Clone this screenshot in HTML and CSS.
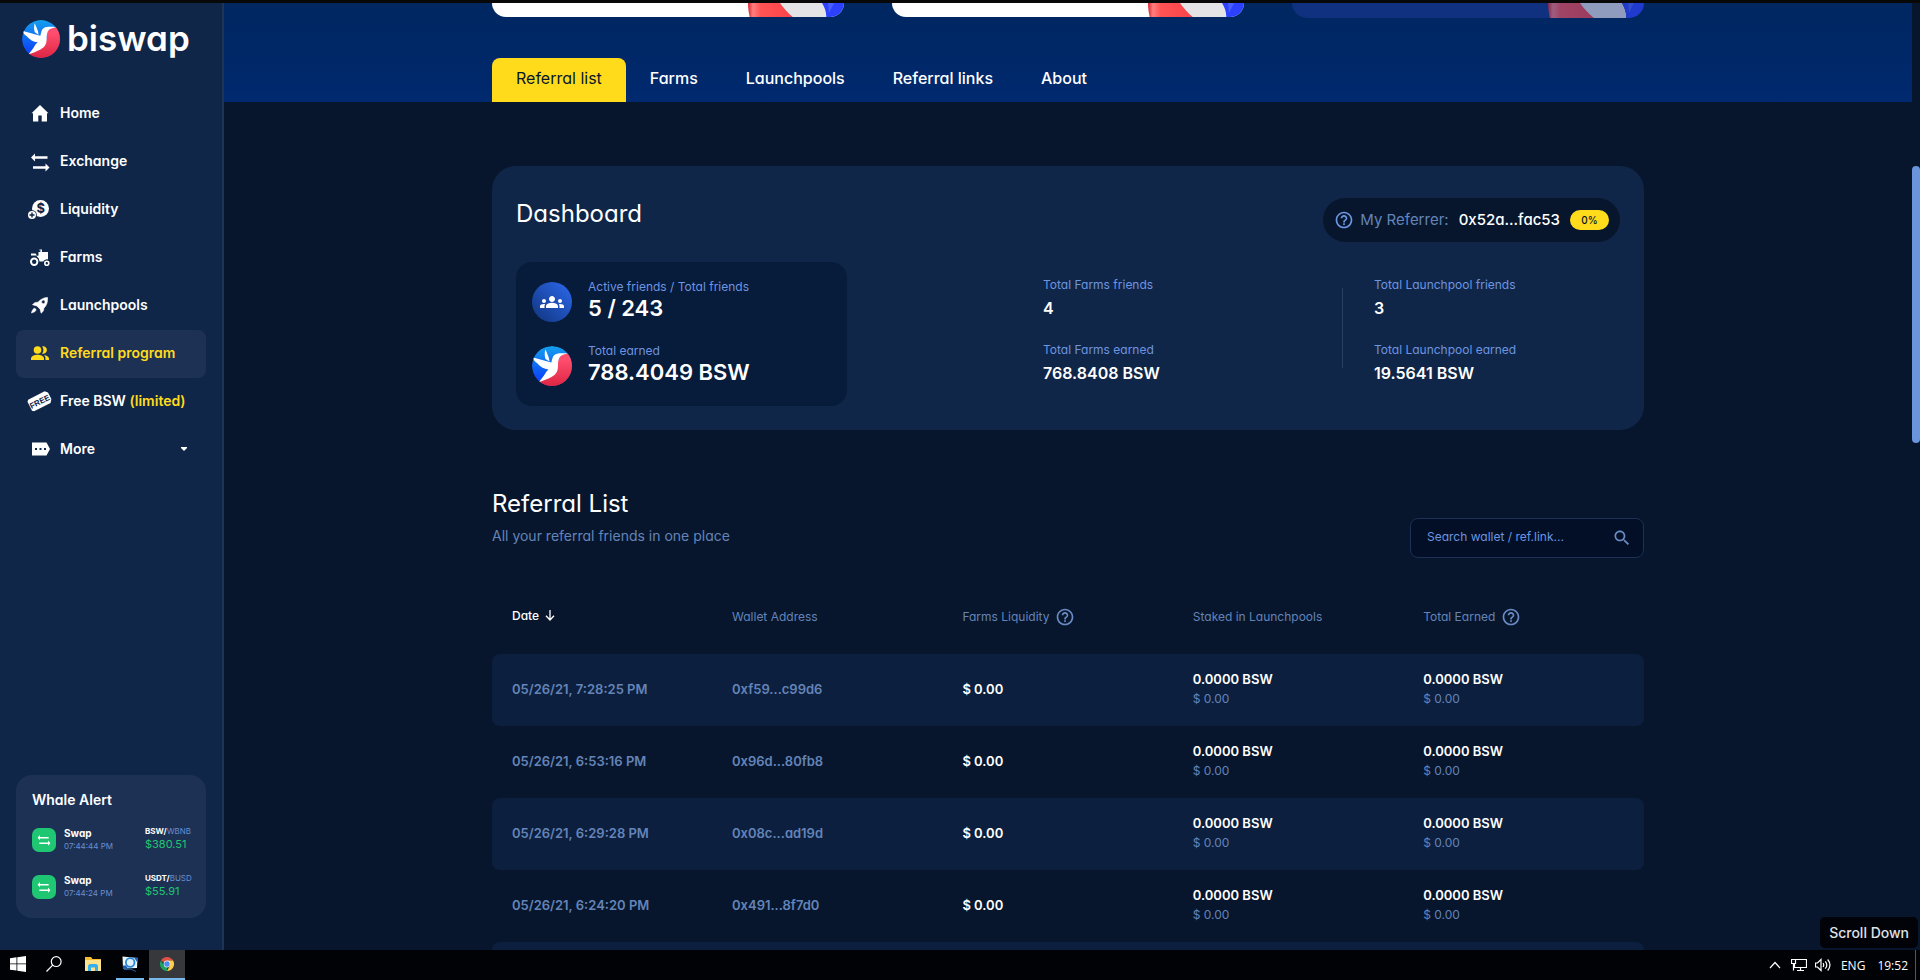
FILE: index.html
```html
<!DOCTYPE html>
<html lang="en">
<head>
<meta charset="utf-8">
<title>Biswap - Referral program</title>
<link rel="stylesheet" href="styles.css">
</head>
<body>
<svg class="defs" aria-hidden="true">
  <defs>
    <linearGradient id="blueGrad" x1="0" y1="0" x2="0" y2="1"><stop offset="0" stop-color="#14a0ee"/><stop offset="0.75" stop-color="#0d4cf6"/></linearGradient>
    <linearGradient id="redGrad" x1="0" y1="0" x2="0" y2="1"><stop offset="0.2" stop-color="#ff4d6d"/><stop offset="1" stop-color="#dc2341"/></linearGradient>
    <linearGradient id="ballRed" x1="0" y1="0" x2="1" y2="0"><stop offset="0" stop-color="#d8242f"/><stop offset="0.1" stop-color="#ff7f80"/><stop offset="0.25" stop-color="#ff5354"/><stop offset="1" stop-color="#f94147"/></linearGradient>
    <symbol id="bird" viewBox="0 0 40 40">
      <circle cx="20" cy="20" r="20" fill="url(#blueGrad)"/>
      <path fill="url(#redGrad)" d="M36 7.500C29 8 26 11 26 17c0 8-3 12-19 18.500A20 20 0 0 0 36 7.500z"/>
      <path fill="#fff" d="M36 7.300C32 7.500 26 6.500 23 8.500c-2.500 1.500-2.700 4.500-3.700 8L1 11.500c.5 2.500 2 4.500 4 5.500 3 3.500 7 6 11.500 6.500-2 1.500-3 3.500-4.500 6L7 36c3-1 8-2.500 12.500-5 5.500-3 6.500-6.500 6.500-12 0-3.500.5-7.500 3.500-9.500 2-1.200 4.500-1.200 6.500-2.200z"/>
      <path fill="#fff" d="M13.300 3.500c1.200 2.500 4 8 4.200 12l-4-2.500c-1-3-1-6-.2-9.500z"/>
    </symbol>
    <symbol id="swap" viewBox="0 0 24 24"><path d="M1 8l4-4.500v3.200h15v2.600H5v3.200zM23 17.500L19 13v3.200H4v2.600h15V22z"/></symbol>
    <symbol id="help" viewBox="0 0 24 24"><path d="M11 18h2v-2h-2v2zm1-16C6.480 2 2 6.480 2 12s4.480 10 10 10 10-4.480 10-10S17.520 2 12 2zm0 18c-4.410 0-8-3.590-8-8s3.590-8 8-8 8 3.590 8 8-3.590 8-8 8zm0-14c-2.210 0-4 1.790-4 4h2c0-1.100.9-2 2-2s2 .9 2 2c0 2-3 1.750-3 5h2c0-2.250 3-2.500 3-5 0-2.210-1.790-4-4-4z"/></symbol>
    <symbol id="ball" viewBox="0 0 96 16" preserveAspectRatio="none">
      <path fill="url(#ballRed)" d="M0 0h50v16H2C1 11 0 6 0 0z"/>
      <path fill="#e4e4e6" d="M32 0h42c3 6 5 11 4 16H47C41 11 36 6 32 0z"/>
      <path fill="#2b41ff" d="M74 0h22v16H78c1-5-1-11-4-16z"/>
      <path fill="#4a5fff" d="M80 0h6l-5 10z"/>
    </symbol>
  </defs>
</svg>
<div class="app">
  <aside class="sidebar">
    <a class="brand" href="#"><svg class="brand-mark" aria-hidden="true"><use href="#bird"/></svg><span class="brand-name">biswap</span></a>
    <nav class="menu" aria-label="Main">
      <a class="menu-item" href="#"><svg class="menu-icon" viewBox="0 0 24 24"><path d="M10.300 20.500v-6h3.400v6H19v-8.300h1.500L12 4l-8.500 8.200H5v8.300z"/></svg>Home</a>
      <a class="menu-item" href="#"><svg class="menu-icon" viewBox="0 0 24 24"><path d="M3 8.500l4-4v2.700h12.500v2.600H7v2.700zM21.500 18.500l-4-4v2.700H5v2.600h12.500v2.700z"/></svg>Exchange</a>
      <a class="menu-item" href="#"><svg class="menu-icon" viewBox="0 0 24 24"><circle cx="12.500" cy="11.500" r="8.500"/><text class="cutout coin-sign" x="12.800" y="16">$</text><circle cx="4" cy="18" r="4.800" class="cutout"/><circle cx="4" cy="18" r="4"/><path class="cutout" d="M3.300 15.500h1.400v1.800h1.800v1.400H4.700v1.800H3.300v-1.800H1.500v-1.400h1.800z"/></svg>Liquidity</a>
      <a class="menu-item" href="#"><svg class="menu-icon" viewBox="0 0 24 24"><path d="M3 8.500h4.500l1.500 2H3zM10.500 10.500V7h1.500l1-1.500h-1.500v-1H14v2L13.500 7H20v7.500h-1.500l-2 2h-5l-.8-3-2.200-2.500z"/><circle cx="6.200" cy="16.800" r="5" class="cutout"/><circle cx="6.200" cy="16.800" r="3.200" fill="none" stroke="#fff" stroke-width="2"/><circle cx="18.800" cy="18.200" r="3.800" class="cutout"/><circle cx="18.800" cy="18.200" r="2" fill="none" stroke="#fff" stroke-width="1.600"/></svg>Farms</a>
      <a class="menu-item" href="#"><svg class="menu-icon" viewBox="0 0 24 24"><path fill-rule="evenodd" d="M19.500 4.500c.3 4.500-.7 8-3.700 10.800.2 2-1 3.700-2.700 4.900l-1-4-3.300-3.300-4.300-1.200c1.500-2 3.500-2.700 5.500-2.500C13 6 16 4.500 19.500 4.500zM15.300 10.700a1.800 1.800 0 1 0 0-3.600 1.800 1.800 0 0 0 0 3.600zM6 15.500c.9-.7 2.500.8 1.800 2C7.200 18.900 5 19.500 3.500 20c.3-1.500 1-3.700 2.500-4.500z" stroke="#fff" stroke-width=".6"/></svg>Launchpools</a>
      <a class="menu-item active" aria-current="page" href="#"><svg class="menu-icon" viewBox="0 0 24 24"><circle cx="9.500" cy="9" r="3.800"/><path d="M3 19v-1.300c0-2.700 3.500-3.900 6.500-3.900s6.500 1.200 6.500 3.900V19zM14 12.500a5 5 0 0 0 0-7 3.700 3.700 0 1 1 0 7zM17.500 19v-1.500c0-1.500-.6-2.600-1.500-3.500 2.500.3 5 1.500 5 3.700V19z"/></svg>Referral program</a>
      <a class="menu-item" href="#"><svg class="menu-icon" viewBox="0 0 24 24"><g transform="rotate(-27 12 12)"><path d="M2 5.500h18.500L23 8v7.500L20.500 18.500H2L.5 17V7z"/><text class="cutout free-sign" x="11.500" y="15.200">FREE</text></g></svg><span>Free BSW <em>(limited)</em></span></a>
      <button class="menu-item" type="button"><svg class="menu-icon" viewBox="0 0 24 24"><path d="M4 5.500h14.500L22 12l-3.500 6.500H4z"/><path class="cutout" d="M7 11h2v2H7zm4.500 0h2v2h-2zm4.500 0h2v2h-2z"/></svg>More<svg class="caret" viewBox="0 0 6 4"><path d="M0 0h6v1L3 4 0 1z"/></svg></button>
    </nav>
    <section class="whale">
      <h2 class="whale-title">Whale Alert</h2>
      <div class="trade">
        <span class="trade-icon"><svg viewBox="0 0 24 24"><use href="#swap"/></svg></span>
        <div class="trade-info"><b>Swap</b><small>07:44:44 PM</small></div>
        <div class="trade-sum"><small><b>BSW/</b>WBNB</small><span>$380.51</span></div>
      </div>
      <div class="trade">
        <span class="trade-icon"><svg viewBox="0 0 24 24"><use href="#swap"/></svg></span>
        <div class="trade-info"><b>Swap</b><small>07:44:24 PM</small></div>
        <div class="trade-sum"><small><b>USDT/</b>BUSD</small><span>$55.91</span></div>
      </div>
    </section>
  </aside>
  <main class="content">
    <header class="hero">
      <div class="container">
        <div class="promo-row">
          <div class="promo"><svg class="promo-art"><use href="#ball"/></svg></div>
          <div class="promo"><svg class="promo-art"><use href="#ball"/></svg></div>
          <div class="promo promo-dim"><svg class="promo-art"><use href="#ball"/></svg></div>
        </div>
        <nav class="tabs" aria-label="Sections">
          <a class="tab tab-active" href="#">Referral list</a>
          <a class="tab" href="#">Farms</a>
          <a class="tab" href="#">Launchpools</a>
          <a class="tab" href="#">Referral links</a>
          <a class="tab" href="#">About</a>
        </nav>
      </div>
    </header>
    <div class="container">
      <section class="dashboard">
        <div class="dashboard-head">
          <h1 class="heading">Dashboard</h1>
          <div class="referrer"><svg class="help-icon"><use href="#help"/></svg><span class="referrer-label">My Referrer:</span><span>0x52a...fac53</span><span class="percent">0%</span></div>
        </div>
        <div class="dashboard-body">
          <div class="totals">
            <div class="total"><span class="total-icon"><svg viewBox="0 0 24 24"><path d="M12 12.750c1.630 0 3.070.39 4.240.9 1.080.48 1.760 1.560 1.760 2.730V18H6v-1.610c0-1.180.68-2.260 1.760-2.730 1.170-.52 2.610-.91 4.240-.91zM4 13c1.100 0 2-.9 2-2s-.9-2-2-2-2 .9-2 2 .9 2 2 2zm1.130 1.100C4.760 14.040 4.390 14 4 14c-.99 0-1.930.21-2.780.58C.48 14.900 0 15.620 0 16.430V18h4.500v-1.610c0-.83.23-1.610.63-2.290zM20 13c1.100 0 2-.9 2-2s-.9-2-2-2-2 .9-2 2 .9 2 2 2zm4 3.430c0-.81-.48-1.530-1.220-1.850C21.930 14.210 20.990 14 20 14c-.39 0-.76.04-1.130.1.4.68.63 1.460.63 2.290V18H24v-1.570zM12 6c1.660 0 3 1.340 3 3s-1.340 3-3 3-3-1.340-3-3 1.340-3 3-3z"/></svg></span>
              <div class="total-text"><div class="label">Active friends / Total friends</div><div class="total-value">5 / 243</div></div></div>
            <div class="total"><svg class="total-bird"><use href="#bird"/></svg>
              <div class="total-text"><div class="label">Total earned</div><div class="total-value">788.4049 BSW</div></div></div>
          </div>
          <div class="stats">
            <div class="stat"><div class="label">Total Farms friends</div><div class="stat-value">4</div></div>
            <div class="stat"><div class="label">Total Farms earned</div><div class="stat-value">768.8408 BSW</div></div>
          </div>
          <div class="divider"></div>
          <div class="stats stats-last">
            <div class="stat"><div class="label">Total Launchpool friends</div><div class="stat-value">3</div></div>
            <div class="stat"><div class="label">Total Launchpool earned</div><div class="stat-value">19.5641 BSW</div></div>
          </div>
        </div>
      </section>
      <div class="list-head">
        <div><h2 class="heading">Referral List</h2><p class="subtitle">All your referral friends in one place</p></div>
        <form class="search"><input class="search-input" type="text" aria-label="Search wallet or referral link" placeholder="Search wallet / ref.link..."><button class="search-button" type="button" aria-label="Search"><svg viewBox="0 0 24 24"><path d="M15.500 14h-.79l-.28-.27C15.410 12.590 16 11.110 16 9.500 16 5.910 13.090 3 9.500 3S3 5.910 3 9.500 5.910 16 9.500 16c1.610 0 3.090-.59 4.230-1.570l.27.28v.79l5 4.990L20.490 19l-4.990-5zm-6 0C7.010 14 5 11.990 5 9.500S7.010 5 9.500 5 14 7.010 14 9.500 11.990 14 9.500 14z"/></svg></button></form>
      </div>
      <table class="list">
        <colgroup><col class="col-date"><col class="col-mid"><col class="col-mid"><col class="col-mid"><col></colgroup>
        <thead><tr>
          <th><button class="sort" type="button">Date <svg viewBox="0 0 10 12"><path d="M5 1v9.500M1 6.800L5 11l4-4.200" fill="none" stroke="#fff" stroke-width="1.300"/></svg></button></th>
          <th>Wallet Address</th>
          <th><span class="with-help">Farms Liquidity <svg class="help-icon"><use href="#help"/></svg></span></th>
          <th>Staked in Launchpools</th>
          <th><span class="with-help">Total Earned <svg class="help-icon"><use href="#help"/></svg></span></th>
        </tr></thead>
        <tbody>
          <tr><td class="muted">05/26/21, 7:28:25 PM</td><td class="muted">0xf59...c99d6</td><td>$ 0.00</td><td>0.0000 BSW<small>$ 0.00</small></td><td>0.0000 BSW<small>$ 0.00</small></td></tr>
          <tr><td class="muted">05/26/21, 6:53:16 PM</td><td class="muted">0x96d...80fb8</td><td>$ 0.00</td><td>0.0000 BSW<small>$ 0.00</small></td><td>0.0000 BSW<small>$ 0.00</small></td></tr>
          <tr><td class="muted">05/26/21, 6:29:28 PM</td><td class="muted">0x08c...ad19d</td><td>$ 0.00</td><td>0.0000 BSW<small>$ 0.00</small></td><td>0.0000 BSW<small>$ 0.00</small></td></tr>
          <tr><td class="muted">05/26/21, 6:24:20 PM</td><td class="muted">0x491...8f7d0</td><td>$ 0.00</td><td>0.0000 BSW<small>$ 0.00</small></td><td>0.0000 BSW<small>$ 0.00</small></td></tr>
          <tr><td></td><td></td><td></td><td></td><td></td></tr>
        </tbody>
      </table>
    </div>
  </main>
  <div class="scroll-track"><div class="scroll-thumb"></div></div>
  <div class="tooltip" role="tooltip">Scroll Down</div>
</div>
<footer class="taskbar">
  <button class="task" type="button" aria-label="Start"><svg viewBox="0 0 16 16"><path d="M0 2.200L6.500 1.300v6.200H0zM7.300 1.200L16 0v7.500H7.300zM0 8.300h6.500v6.300L0 13.700zM7.300 8.300H16V16l-8.700-1.200z"/></svg></button>
  <button class="task" type="button" aria-label="Search"><svg class="line-icon" viewBox="0 0 16 16"><circle cx="10.200" cy="5.600" r="4.900"/><path d="M6.700 9.200L.5 15.500"/></svg></button>
  <button class="task task-files" type="button" aria-label="File Explorer"><svg viewBox="0 0 16 16"><path fill="#f5bd36" d="M0 1h6l1.500 2H16v3H0z"/><path fill="#ffe28c" d="M0 4h16v11H0z"/><path fill="#36b0ec" d="M3 15V9.500L4.500 8h7L13 9.500V15h-3v-3.500H6V15z"/></svg></button>
  <button class="task task-open" type="button" aria-label="Screen tool"><svg viewBox="0 0 16 16"><path fill="#eaf6fb" d="M.5.500l15 1.500-.5 10-14 .5z"/><path fill="#1b5db5" d="M12 1.500h3.500L15 6zM1 9.500h3l2 3H1z"/><circle cx="8.200" cy="6.500" r="4.300" fill="#dff2fb" stroke="#2a86d2" stroke-width="1.800"/><path d="M2 13.500l7-.3 5 2.300" stroke="#1b62a8" fill="none"/></svg></button>
  <button class="task task-current" type="button" aria-label="Chrome"><svg viewBox="0 0 16 16"><path fill="#dd5144" d="M8 8L1.900 4.500A7 7 0 0 1 14.100 4.500H8z"/><path fill="#ffcd46" d="M8 4.500h6.100A7 7 0 0 1 8 15l3-5.200z"/><path fill="#1da362" d="M1.900 4.500l3.100 5.200 3 1.800L8 15A7 7 0 0 1 1.900 4.500z"/><circle cx="8" cy="8" r="3.400" fill="#f1f1f1"/><circle cx="8" cy="8" r="2.700" fill="#4c8bf5"/></svg></button>
  <div class="tray">
    <svg class="tray-chevron line-icon" viewBox="0 0 12 8"><path d="M1 7l5-5.500L11 7"/></svg>
    <svg class="tray-icon line-icon" viewBox="0 0 16 16"><path d="M4.500 2.500h11v8H3.500V7M9.500 10.500v3M6 13.500h7M.5 2.500h4v4h-4zM2.500 6.500v7"/></svg>
    <svg class="tray-icon line-icon" viewBox="0 0 16 16"><path d="M.5 6v4h2l3.500 3.500v-11L2.500 6zM8 6q1.500 2 0 4M10.300 4.300q3 3.700 0 7.400M12.700 2.500q4.500 5.500 0 11"/></svg>
    <span class="tray-lang">ENG</span><span>19:52</span>
  </div>
</footer>
</body>
</html>
```

FILE: styles.css
```css
* { box-sizing: border-box; }
body {
  margin: 0;
  height: 100vh;
  display: flex;
  flex-direction: column;
  overflow: hidden;
  background: #07162d;
  border-top: 3px solid #080808;
  color: #fff;
  font-family: Inter, "Liberation Sans", sans-serif;
  font-feature-settings: "cv11";
  font-size: 14px;
}
h1, h2, p { margin: 0; }
a { color: inherit; text-decoration: none; }
button { border: 0; padding: 0; background: none; color: inherit; font: inherit; font-feature-settings: inherit; }
svg { display: block; flex: none; fill: currentColor; }
.line-icon { fill: none; stroke: #fff; stroke-width: 1.2; }
.defs { position: absolute; width: 0; height: 0; }

.app { position: relative; flex: 1; min-height: 0; display: flex; }

.sidebar {
  width: 224px;
  flex: none;
  display: flex;
  flex-direction: column;
  padding: 16px 16px 32px;
  background: #102648;
  border-right: 2px solid #1e3355;
}
.brand { display: flex; align-items: center; gap: 7px; padding-left: 6px; height: 40px; }
.brand-mark { width: 38px; height: 38px; border-radius: 50%; }
.brand-name { padding-bottom: 2px; font-size: 35px; line-height: 36px; font-weight: 600; }
.menu { display: flex; flex-direction: column; margin-top: 31px; }
.menu-item {
  display: flex;
  align-items: center;
  gap: 8px;
  height: 48px;
  padding: 0 19px 3px 12px;
  border-radius: 8px;
  font-weight: 600;
}
.menu-item em { font-style: normal; color: #ffdb1c; }
.menu-icon { width: 24px; height: 24px; overflow: visible; }
.cutout { fill: #102648; }
.coin-sign { font: 700 13px Inter, sans-serif; text-anchor: middle; }
.free-sign { font: 700 8px "Liberation Sans", sans-serif; text-anchor: middle; }
.active { background: #1d3154; color: #ffdb1c; }
.caret { width: 6px; height: 4px; margin-left: auto; }

.whale { margin-top: auto; height: 143px; padding: 15px 15px 0 16px; border-radius: 16px; background: #1d3154; }
.whale-title { font-size: 14px; line-height: 20px; font-weight: 600; }
.trade { display: flex; gap: 8px; height: 24px; margin-top: 18px; }
.trade + .trade { margin-top: 23px; }
.trade-icon { display: grid; place-items: center; width: 24px; height: 24px; border-radius: 7px; background: #1fc772; }
.trade-icon svg { width: 14px; height: 14px; }
.trade-info, .trade-sum { display: flex; flex-direction: column; justify-content: center; gap: 2px; padding-bottom: 3px; }
.trade-info b { font-size: 10px; line-height: 12px; }
.trade-info small { font-size: 8px; line-height: 10px; color: #6a8fd0; }
.trade-sum { width: 46px; margin-left: auto; white-space: nowrap; gap: 1px; }
.trade-sum small { font-size: 8px; line-height: 10px; color: #6a8fd0; }
.trade-sum small b { color: #fff; }
.trade-sum span { font-size: 11px; line-height: 14px; color: #1fc772; }

.content { flex: 1; min-width: 0; overflow: hidden; }
.container { width: 1152px; max-width: 100%; margin: 0 auto; }
.hero { background: linear-gradient(#002760, #00296f); }
.promo-row { display: flex; align-items: flex-start; gap: 48px; height: 55px; }
.promo { flex: 1; height: 14px; display: flex; justify-content: flex-end; overflow: hidden; border-radius: 0 0 16px 16px; background: #fff; }
.promo-dim { height: 15px; background: #10317f; }
.promo-dim .promo-art { opacity: 0.6; }
.promo-art { width: 96px; height: 16px; }
.tabs { display: flex; }
.tab { padding: 0 24px; height: 44px; line-height: 41px; font-size: 16px; font-weight: 500; }
.tab-active { background: #ffdb1c; color: #07162d; border-radius: 8px 8px 0 0; font-weight: 400; }

.dashboard { height: 264px; margin-top: 64px; padding: 32px 24px 24px; border-radius: 24px; background: #102648; }
.dashboard-head { display: flex; justify-content: space-between; }
.heading { font-size: 24px; line-height: 32px; font-weight: 400; }
.referrer { display: flex; align-items: center; height: 44px; padding: 0 11px; border-radius: 22px; background: #07162d; font-size: 15px; line-height: 20px; font-weight: 500; }
.help-icon { width: 20px; height: 20px; fill: #6a8bc4; }
.referrer .help-icon { fill: #6d95e0; }
.referrer-label { margin: 0 10px 0 6px; font-weight: 400; color: #6484b8; }
.percent { margin-left: 10px; width: 39px; border-radius: 10px; background: #ffdb1c; color: #07162d; font-size: 10px; text-align: center; }
.dashboard-body { display: flex; margin-top: 20px; }
.totals { width: 331px; height: 144px; padding: 20px 16px; display: grid; gap: 24px; border-radius: 16px; background: #071b3a; }
.total { display: flex; align-items: center; gap: 16px; height: 40px; }
.total-icon { display: grid; place-items: center; width: 40px; height: 40px; border-radius: 50%; background: linear-gradient(45deg, #10347c, #2d69ee); }
.total-icon svg { width: 24px; height: 24px; }
.total-bird { width: 40px; height: 40px; border-radius: 50%; }
.total-text { padding-bottom: 4px; }
.label { font-size: 12px; line-height: 16px; color: #6d95e0; }
.total-value { font-size: 22px; line-height: 26px; font-weight: 600; }
.stats { flex: 1; display: grid; align-content: start; gap: 22px; padding: 15px 0 0 196px; }
.divider { width: 1px; height: 80px; margin: 26px 31px 0 0; background: #2a3f64; }
.stats-last { flex: none; width: 246px; padding-left: 0; }
.stat-value { margin-top: 4px; font-size: 16px; line-height: 23px; font-weight: 600; }

.list-head { display: flex; justify-content: space-between; margin-top: 58px; }
.subtitle { margin-top: 6px; font-size: 14px; line-height: 20px; color: #6484b8; }
.search { display: flex; align-items: center; width: 234px; height: 40px; margin-top: 30px; padding: 0 11px 0 16px; border: 1px solid #1d3154; border-radius: 8px; background: #020f26; }
.search-input { flex: 1; min-width: 0; border: 0; padding: 0 0 3px; background: none; color: #fff; font: inherit; font-feature-settings: inherit; font-size: 12px; outline: 0; }
.search-input::placeholder { color: #6d95e0; opacity: 1; }
.search-button svg { width: 20px; height: 20px; fill: #6a8bc4; }

.list { width: 100%; margin-top: 24px; table-layout: fixed; border-collapse: collapse; }
.col-date { width: 240px; }
.col-mid { width: 20%; }
.list th { height: 72px; padding: 0 0 3px; text-align: left; font-size: 12px; font-weight: 400; color: #6484b8; }
.list td { height: 72px; padding: 0 0 3px; font-weight: 600; font-size: 13px; line-height: 20px; }
.list th:first-child, .list td:first-child { padding-left: 20px; }
.list td small { display: block; font-size: 12px; font-weight: 400; color: #6484b8; }
.list .muted { color: #6484b8; }
.list tbody tr:nth-child(odd) td { background: #0c1f3e; }
.list td:first-child { border-radius: 8px 0 0 8px; }
.list td:last-child { border-radius: 0 8px 8px 0; }
.sort { display: flex; align-items: center; gap: 6px; padding-bottom: 3px; color: #fff; font-weight: 500; }
.sort svg { width: 10px; height: 12px; }
.with-help { display: flex; align-items: center; gap: 6px; }

.scroll-track { width: 8px; background: #07162d; padding-top: 163px; }
.scroll-thumb { height: 277px; border-radius: 4px; background: #6a94dc; }
.tooltip { position: absolute; right: 2px; bottom: 2px; padding: 0 9px; border-radius: 5px; background: #020308; color: #dfe1e6; font-size: 14px; line-height: 31px; font-weight: 500; }

.taskbar { display: flex; height: 30px; flex: none; background: #010205; }
.task { display: grid; place-items: center; width: 36px; height: 30px; border-bottom: 2px solid transparent; }
.task svg { width: 16px; height: 16px; }
.task-files { margin-left: 3px; }
.task-open { width: 28px; margin: 0 5px; border-bottom-color: #76b9ed; }
.task-current { background: #37383c; border-bottom-color: #76b9ed; }
.tray { display: flex; align-items: center; margin: 0 4px 0 auto; padding-right: 7px; border-right: 1px solid #55565a; font: 12px "Open Sans", sans-serif; }
.tray-chevron { width: 12px; height: 8px; margin-right: 10px; }
.tray-icon { width: 16px; height: 16px; margin-right: 8px; }
.tray-lang { margin: 0 12px 0 2px; }
```
